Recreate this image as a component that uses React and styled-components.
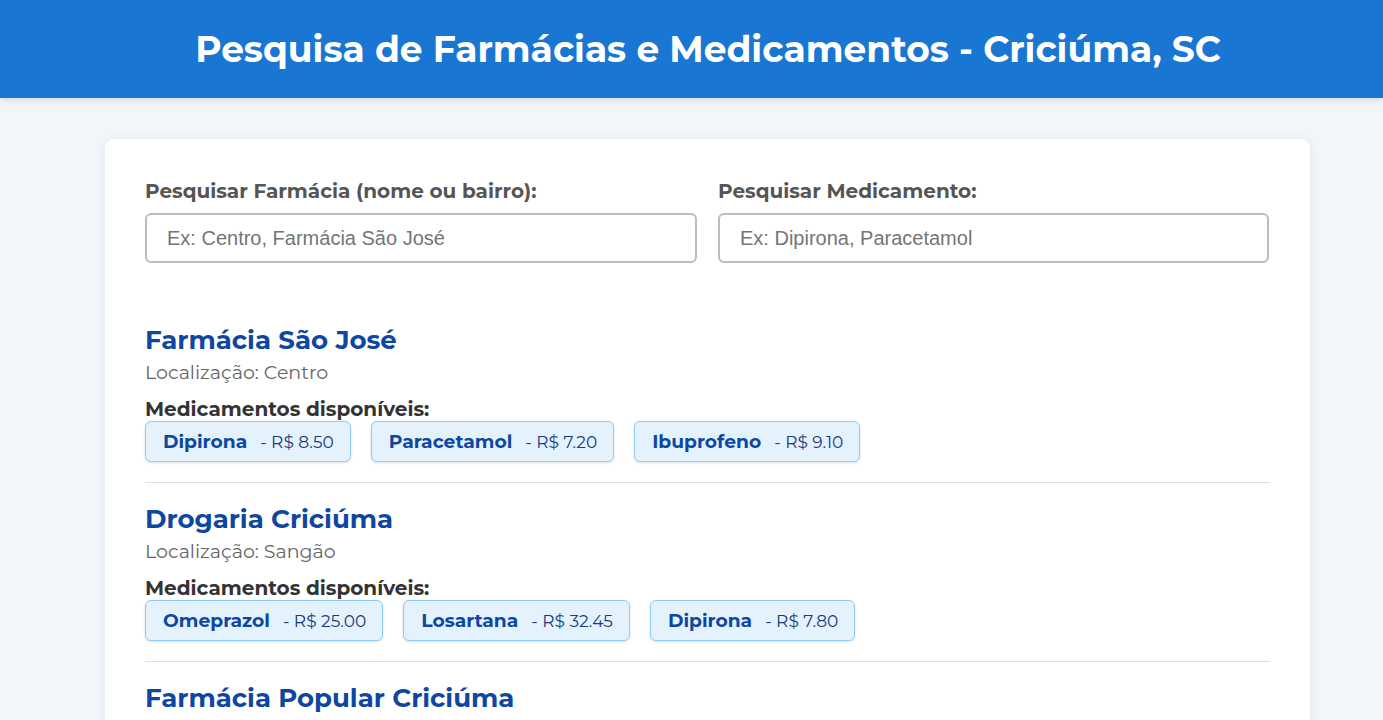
import React from "react";
import styled, { createGlobalStyle } from "styled-components";

const Global = createGlobalStyle`
  * { box-sizing: border-box; }
  body {
    margin: 0;
    background: #f2f6fa;
    font-family: Montserrat, "DejaVu Sans", "Noto Sans", sans-serif;
    overflow: hidden;
  }
`;

const Header = styled.header`
  background: #1976d2;
  height: 98px;
  display: flex;
  align-items: center;
  justify-content: center;
  padding-left: 33px;
  box-shadow: 0 2px 6px rgba(0, 0, 0, 0.12);
`;

const Title = styled.h1`
  margin: 0;
  color: #fff;
  font-size: 36px;
  font-weight: 700;
`;

const Main = styled.main`
  padding: 41px 73px 0 105px;
`;

const Card = styled.section`
  background: #fff;
  border-radius: 9px;
  box-shadow: 0 2px 12px rgba(0, 0, 0, 0.08);
  padding: 40px 40px 20px;
  width: 1205px;
`;

const SearchGrid = styled.div`
  display: grid;
  grid-template-columns: 552px 551px;
  column-gap: 21px;
  margin-bottom: 60px;
`;

const Field = styled.label`
  display: flex;
  flex-direction: column;
  gap: 10px;
`;

const Label = styled.span`
  font-size: 20px;
  font-weight: 700;
  color: #555;
  line-height: 24px;
`;

const Input = styled.input`
  height: 50px;
  border: 2px solid #bdbdbd;
  border-radius: 6px;
  padding: 0 20px;
  font-family: "Liberation Sans", Arial, sans-serif;
  font-size: 20px;
  color: #333;
  outline: none;
  &::placeholder { color: #757575; }
`;

const Pharmacy = styled.article`
  padding-bottom: 20px;
  border-bottom: ${(p) => (p.$last ? "none" : "1px solid #ddd")};
  margin-bottom: 19px;
`;

const Name = styled.h2`
  margin: 0;
  font-size: 26px;
  font-weight: 700;
  color: #0d47a1;
  line-height: 34px;
`;

const Location = styled.p`
  margin: 4px 0 12px;
  font-size: 19px;
  color: #666;
  line-height: 24px;
`;

const MedTitle = styled.p`
  margin: 0;
  font-size: 20px;
  font-weight: 700;
  color: #333;
  line-height: 24px;
`;

const Chips = styled.div`
  display: flex;
  flex-wrap: wrap;
  gap: 20px;
`;

const Chip = styled.div`
  display: flex;
  align-items: center;
  height: 41px;
  padding: 0 16px 0 17px;
  background: #e3f2fd;
  border: 1px solid #90caf9;
  border-radius: 6px;
  box-shadow: 0 1px 3px rgba(0, 0, 0, 0.12);
  color: #0d47a1;
`;

const ChipName = styled.strong`
  font-size: 18.7px;
  font-weight: 700;
  margin-right: 13px;
`;

const ChipPrice = styled.span`
  font-size: 17px;
  color: #1a3a7a;
`;

const pharmacies = [
  {
    name: "Farmácia São José",
    loc: "Centro",
    meds: [
      ["Dipirona", "8.50"],
      ["Paracetamol", "7.20"],
      ["Ibuprofeno", "9.10"],
    ],
  },
  {
    name: "Drogaria Criciúma",
    loc: "Sangão",
    meds: [
      ["Omeprazol", "25.00"],
      ["Losartana", "32.45"],
      ["Dipirona", "7.80"],
    ],
  },
  {
    name: "Farmácia Popular Criciúma",
    loc: "Pinheirinho",
    meds: [
      ["Amoxicilina", "18.90"],
      ["Dipirona", "8.00"],
    ],
  },
];

export default function App() {
  return (
    <>
      <Global />
      <Header>
        <Title>Pesquisa de Farmácias e Medicamentos - Criciúma, SC</Title>
      </Header>
      <Main>
        <Card>
          <SearchGrid>
            <Field>
              <Label>Pesquisar Farmácia (nome ou bairro):</Label>
              <Input placeholder="Ex: Centro, Farmácia São José" />
            </Field>
            <Field>
              <Label>Pesquisar Medicamento:</Label>
              <Input placeholder="Ex: Dipirona, Paracetamol" />
            </Field>
          </SearchGrid>
          {pharmacies.map((ph, i) => (
            <Pharmacy key={ph.name} $last={i === pharmacies.length - 1}>
              <Name>{ph.name}</Name>
              <Location>Localização: {ph.loc}</Location>
              <MedTitle>Medicamentos disponíveis:</MedTitle>
              <Chips>
                {ph.meds.map(([m, p]) => (
                  <Chip key={m}>
                    <ChipName>{m}</ChipName>
                    <ChipPrice>- R$ {p}</ChipPrice>
                  </Chip>
                ))}
              </Chips>
            </Pharmacy>
          ))}
        </Card>
      </Main>
    </>
  );
}
